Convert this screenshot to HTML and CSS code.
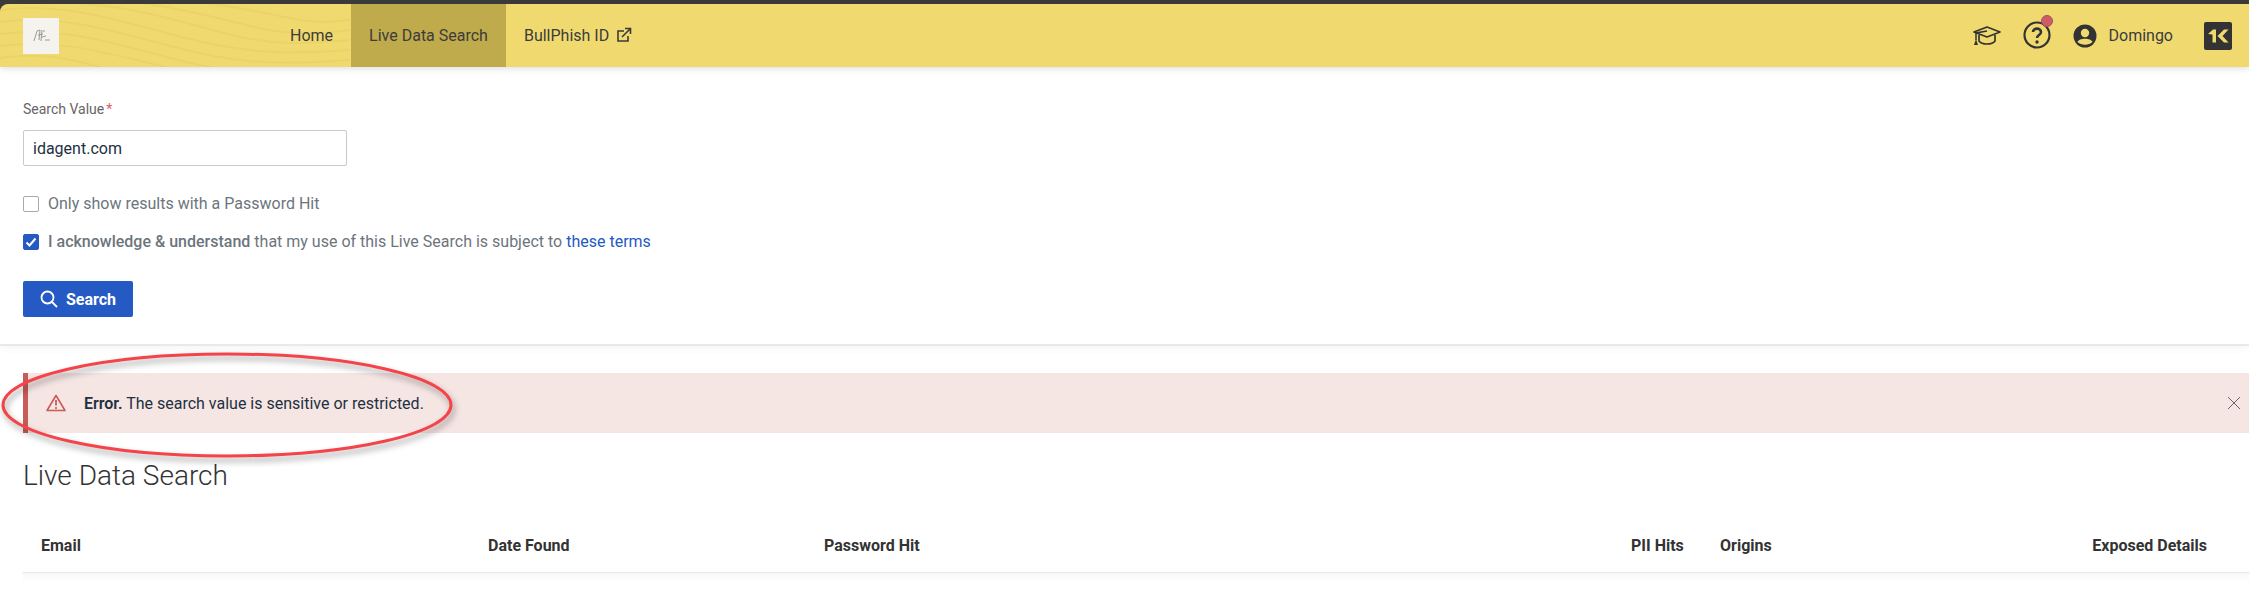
FILE: index.html
```html
<!DOCTYPE html>
<html lang="en">
<head>
    <meta charset="UTF-8">
    <title>Live Data Search</title>
    <link rel="stylesheet" href="styles.css">
</head>
<body>
    <header class="topbar">
        <div class="topbar-inner">
            <svg class="waves" viewBox="0 0 360 63" preserveAspectRatio="none">
                <path d="M0 6C60 -2 110 14 170 30S270 52 350 46"/>
                <path d="M0 18C60 10 110 26 170 42S270 62 350 56"/>
                <path d="M0 30C60 22 110 38 170 54S250 68 300 66"/>
                <path d="M0 42C60 34 110 50 170 64"/>
                <path d="M0 54C40 48 70 54 110 66"/>
                <path d="M60 -2C120 0 170 14 220 28S300 40 350 36"/>
                <path d="M130 -2C170 2 210 12 250 22S320 30 350 26"/>
                <path d="M200 -2C230 2 260 8 290 14S330 18 350 16"/>
            </svg>
            <div class="logo">
                <svg width="20" height="16" viewBox="0 0 20 16">
                    <path d="M3 13L6 3L9 2L8 12M7 7L12 6M11 2L10 13M12 3L14 3M11 9L15 8M14 12L19 12" fill="none" stroke="#9a9a96" stroke-width="1"/>
                </svg>
            </div>
            <nav class="nav">
                <a class="nav-link">Home</a>
                <a class="nav-link nav-active">Live Data Search</a>
                <a class="nav-link">BullPhish ID
                    <svg class="ext-icon" width="16" height="16" viewBox="0 0 16 16">
                        <path d="M12 9V14H2V4H8" fill="none" stroke="#3a3a3a" stroke-width="1.6"/>
                        <path d="M6 10L14 2M9 1.5H14.500V7" fill="none" stroke="#3a3a3a" stroke-width="1.6"/>
                    </svg>
                </a>
            </nav>
            <div class="topbar-right">
                <svg class="cap-icon" width="28" height="20" viewBox="0 0 28 20">
                    <path d="M14 1L27 6L14 11L1 6Z" fill="none" stroke="#333" stroke-width="1.700" stroke-linejoin="round"/>
                    <path d="M6 9V15C9 19 19 19 22 15V9" fill="none" stroke="#333" stroke-width="1.700"/>
                    <path d="M14 5L3 7V14" fill="none" stroke="#333" stroke-width="1.500"/>
                    <path d="M3 13L5 19H1Z" fill="#333"/>
                </svg>
                <div class="help">
                    <svg width="28" height="28" viewBox="0 0 28 28">
                        <circle cx="14" cy="14" r="12.500" fill="none" stroke="#333" stroke-width="2.200"/>
                        <path d="M10 11C10 6.500 18 6.500 18 11C18 14 14 14 14 17" fill="none" stroke="#333" stroke-width="2.600"/>
                        <circle cx="14" cy="21" r="1.700" fill="#333"/>
                    </svg>
                    <span class="help-badge"></span>
                </div>
                <div class="user">
                    <svg width="24" height="24" viewBox="0 0 24 24">
                        <circle cx="12" cy="12" r="11.500" fill="#333"/>
                        <circle cx="12" cy="9" r="4.200" fill="#f0da70"/>
                        <path d="M4.500 18C6 13.500 18 13.500 19.500 18C15.500 21.500 8.500 21.500 4.500 18Z" fill="#f0da70"/>
                    </svg>
                    <span>Domingo</span>
                </div>
                <div class="brand">
                    <svg width="22" height="16" viewBox="0 0 22 16">
                        <path d="M1 6L6 1.500H9V14.500H5.500V6.500Z" fill="#f0da70"/>
                        <path d="M10.500 8L17 1.500H21.500L15.500 8L21.500 14.500H17Z" fill="#f0da70"/>
                    </svg>
                </div>
            </div>
        </div>
    </header>

    <section class="search-panel">
        <label class="field-label">Search Value<span class="required">*</span></label>
        <input class="field-input" type="text" value="idagent.com">
        <div class="check-row check-first">
            <span class="check"></span>
            <span>Only show results with a Password Hit</span>
        </div>
        <div class="check-row check-second">
            <span class="check check-on">
                <svg width="12" height="12" viewBox="0 0 12 12"><path d="M1.500 6.500L4.500 9.500L10.500 2.500" fill="none" stroke="#fff" stroke-width="2"/></svg>
            </span>
            <span><strong>I acknowledge &amp; understand</strong> that my use of this Live Search is subject to <a class="terms">these terms</a></span>
        </div>
        <button class="btn-search">
            <svg width="18" height="18" viewBox="0 0 18 18">
                <circle cx="7.500" cy="7.500" r="6" fill="none" stroke="#fff" stroke-width="1.800"/>
                <path d="M12 12L17 17" stroke="#fff" stroke-width="1.800"/>
            </svg>
            Search
        </button>
    </section>

    <div class="alert">
        <svg class="alert-icon" width="20" height="18" viewBox="0 0 20 18">
            <path d="M10 1.500L19 16.500H1Z" fill="none" stroke="#c75c58" stroke-width="1.600" stroke-linejoin="round"/>
            <path d="M10 6V11.500" stroke="#c75c58" stroke-width="1.800"/>
            <circle cx="10" cy="14" r="1.100" fill="#c75c58"/>
        </svg>
        <span class="alert-text"><strong>Error.</strong> The search value is sensitive or restricted.</span>
        <svg class="alert-close" width="14" height="14" viewBox="0 0 14 14">
            <path d="M1 1L13 13M13 1L1 13" stroke="#666" stroke-width="1"/>
        </svg>
    </div>

    <svg class="callout" width="470" height="130" viewBox="0 0 470 130">
        <ellipse cx="227" cy="55" rx="224" ry="51" fill="none" stroke="#f5434a" stroke-width="3"/>
    </svg>

    <h1 class="page-title">Live Data Search</h1>

    <div class="results-head">
        <div>Email</div>
        <div>Date Found</div>
        <div>Password Hit</div>
        <div>PII Hits</div>
        <div>Origins</div>
        <div class="col-right">Exposed Details</div>
    </div>
    <div class="results-fade"></div>
</body>
</html>
```

FILE: styles.css
```css
html, body { height: 100%; }
body { margin: 0; background: #fff; color: #333; font-family: Roboto, "Liberation Sans", sans-serif; font-size: 16px; position: relative; overflow: hidden; }

.topbar { background: #3a3a3a; padding-top: 4px; box-shadow: 0 2px 6px rgba(0,0,0,0.12); position: relative; }
.topbar-inner { background: #f0da70; border-top-left-radius: 8px; height: 63px; display: flex; align-items: stretch; position: relative; overflow: hidden; }
.waves { position: absolute; left: 0; top: 0; width: 360px; height: 63px; }
.waves path { fill: none; stroke: #e9d064; stroke-width: 2; opacity: 0.7; }
.logo { width: 36px; height: 36px; margin: 14px 0 0 23px; background: #f4f3ee; display: flex; align-items: center; justify-content: center; position: relative; }

.nav { display: flex; margin-left: 213px; position: relative; font-size: 16px; color: #3c3c3c; }
.nav-link { padding: 0 18px; line-height: 63px; white-space: nowrap; display: block; }
.nav-active { background: #bfab4b; }
.ext-icon { vertical-align: -2px; margin-left: 3px; }

.topbar-right { margin-left: auto; display: flex; align-items: center; padding-right: 17px; }
.cap-icon { margin-right: 22px; }
.help { position: relative; height: 28px; margin-right: 22px; margin-top: -2px; }
.help-badge { position: absolute; top: -6px; right: -2px; width: 10px; height: 10px; border-radius: 50%; background: #cc5f5d; border: 1px solid #a94a72; }
.user { display: flex; align-items: center; gap: 12px; margin-right: 31px; color: #3c3c3c; }
.brand { width: 28px; height: 28px; background: #333; border-radius: 2px; display: flex; align-items: center; justify-content: center; }

.search-panel { height: 279px; padding: 0 23px; border-bottom: 2px solid #e9e9e9; box-shadow: 0 3px 8px rgba(0,0,0,0.04); box-sizing: border-box; }
.field-label { display: block; padding-top: 32px; font-size: 14px; line-height: 20px; color: #666; }
.required { color: #d9605c; margin-left: 2px; }
.field-input { display: block; width: 324px; height: 36px; box-sizing: border-box; margin-top: 11px; padding: 0 9px; border: 1px solid #c9c9c9; border-radius: 2px; font: 16px Roboto, sans-serif; color: #23303f; }

.check-row { display: flex; align-items: center; gap: 9px; color: #6c757d; line-height: 22px; }
.check-first { margin-top: 27px; }
.check-second { margin-top: 16px; }
.check-row strong { font-weight: 500; }
.check { width: 16px; height: 16px; box-sizing: border-box; border: 1px solid #aaa; border-radius: 2px; display: flex; align-items: center; justify-content: center; }
.check-on { background: #2559c4; border-color: #2559c4; }
.terms { color: #2559c4; }

.btn-search { display: flex; align-items: center; gap: 8px; width: 110px; height: 36px; margin-top: 28px; padding: 0 0 0 17px; background: #2559c4; border: none; border-radius: 2px; color: #fff; font: 700 16px Roboto, sans-serif; }

.alert { margin: 27px 0 0 23px; height: 60px; background: #f5e6e4; border-left: 5px solid #c75c58; display: flex; align-items: center; color: #23303f; }
.alert-icon { margin-left: 18px; }
.alert-text { margin-left: 18px; }
.alert-text strong { font-weight: 600; }
.alert-close { margin-left: auto; margin-right: 8px; }

.callout { position: absolute; left: 0; top: 350px; filter: drop-shadow(2px 4px 3px rgba(0,0,0,0.4)); }

.page-title { margin: 26px 0 0 23px; font-size: 28px; font-weight: 300; line-height: 34px; color: #333; }

.results-head { display: grid; grid-template-columns: 447px 336px 807px 89px 1fr auto; margin-left: 23px; padding: 0 42px 17px 18px; height: 80px; align-items: end; box-sizing: border-box; border-bottom: 1px solid #e6e6e6; font-weight: 700; color: #333; }
.results-fade { height: 10px; margin-left: 23px; background: linear-gradient(#f8f8f8, #fff); }
```
